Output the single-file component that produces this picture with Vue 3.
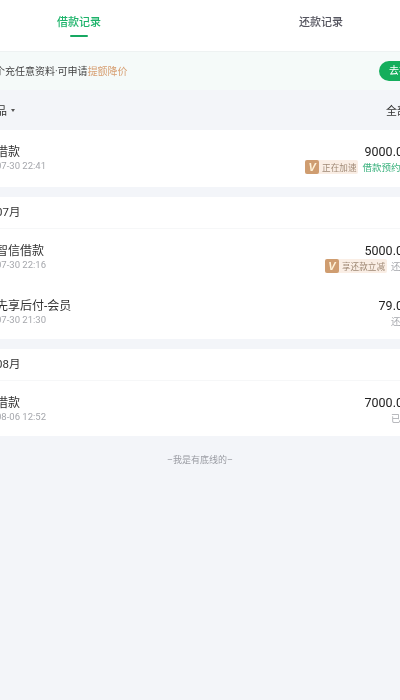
<script setup>
const groups = [
  { month: '', rows: [
    { title: '借款', date: '07-30 22:41', amount: '9000.00', badge: '正在加速', status: '借款预约中', tone: 'green' }
  ]},
  { month: '07月', rows: [
    { title: '智信借款', date: '07-30 22:16', amount: '5000.00', badge: '享还款立减', status: '还款', tone: 'gray' },
    { title: '先享后付-会员', date: '07-30 21:30', amount: '79.00', status: '还款', tone: 'gray' }
  ]},
  { month: '08月', rows: [
    { title: '借款', date: '08-06 12:52', amount: '7000.00', status: '已还', tone: 'gray' }
  ]}
]
</script>

<template>
  <div class="viewport">
    <div class="page">
      <header class="tabs">
        <div class="tab active">借款记录<i class="underline"></i></div>
        <div class="tab">还款记录</div>
      </header>
      <div class="banner">
        <span class="banner-text">个充任意资料·可申请<em>提额降价</em></span>
        <span class="go">去补充</span>
      </div>
      <div class="filter">
        <span class="filter-left">全部产品<i class="caret"></i></span>
        <span class="filter-right">全部</span>
      </div>
      <section v-for="(g, i) in groups" :key="i" class="card" :class="{ solo: !g.month }">
        <div v-if="g.month" class="month">{{ g.month }}</div>
        <div v-for="r in g.rows" :key="r.date" class="row">
          <div class="left">
            <div class="title">{{ r.title }}</div>
            <div class="date">{{ r.date }}</div>
          </div>
          <div class="right">
            <div class="amount">{{ r.amount }}</div>
            <div class="meta">
              <span v-if="r.badge" class="badge"><b class="v">V</b>{{ r.badge }}</span>
              <span class="status" :class="r.tone">{{ r.status }}</span>
            </div>
          </div>
        </div>
      </section>
      <footer class="end">–我是有底线的–</footer>
    </div>
  </div>
</template>

<style scoped>
.viewport { width: 400px; height: 700px; overflow: hidden; background: #f3f5f9; }
.page {
  width: 420px; margin-left: -10px;
  font-family: Roboto, "Noto Sans CJK SC", sans-serif;
  color: #333;
  filter: blur(0.35px);
}
.tabs {
  height: 52px; box-sizing: border-box; display: flex; justify-content: space-between;
  padding: 0 67px; background: #fff; border-bottom: 1px solid #eef2f2;
}
.tab {
  display: flex; flex-direction: column; align-items: center;
  padding-top: 14px; font-size: 11px; line-height: 18px; color: #55555f; font-weight: 500;
}
.active { color: #1cb36a; }
.underline { width: 18px; height: 2px; margin-top: 3px; border-radius: 1px; background: #17a862; }
.banner {
  height: 38px; box-sizing: border-box; padding: 0 0 1px 5px; display: flex; align-items: center; justify-content: space-between;
  background: #f5faf9; font-size: 10px; color: #444;
}
.banner-text { margin-top: -1px; }
.banner em { font-style: normal; color: #d79f72; }
.go {
  flex: none; width: 50px; height: 20px; margin-right: -19px; border-radius: 10px;
  background: #14ae5c; color: #fff; font-size: 10px; line-height: 20px; text-align: center;
}
.filter {
  height: 40px; display: flex; align-items: center; justify-content: space-between;
  padding-right: 2px; font-size: 11px; color: #333;
}
.filter-left { display: flex; align-items: center; margin-left: -27px; }
.caret {
  width: 0; height: 0; margin-left: 4px;
  border-left: 2px solid transparent; border-right: 2px solid transparent; border-top: 3px solid #555;
}
.card { background: #fff; margin-bottom: 10px; }
.card.solo { padding-bottom: 2px; }
.month {
  height: 32px; line-height: 31px; padding-left: 6px; font-size: 11.5px; color: #333;
  border-bottom: 1px solid #f6f7f8; box-sizing: border-box;
}
.row { height: 55px; display: flex; justify-content: space-between; padding-left: 6px; }
.title { margin-top: 14px; font-size: 12px; line-height: 16px; color: #333; white-space: nowrap; }
.date { font-size: 9.5px; line-height: 12px; color: #a5a7ac; white-space: nowrap; }
.right { display: flex; flex-direction: column; align-items: flex-end; }
.amount { margin-top: 13.5px; font-size: 12.5px; line-height: 16px; color: #222; }
.meta { display: flex; align-items: center; height: 15px; font-size: 9.5px; }
.badge {
  display: flex; align-items: center; height: 14px; background: #faeee5; color: #a08a76;
  padding-right: 2px; margin-right: 4px; border-radius: 2px; white-space: nowrap; font-size: 8.6px;
}
.v {
  width: 14px; height: 14px; margin-right: 3px; background: #cf9d70; color: #fff2d8; border-radius: 2px;
  font: italic 700 11px/14px "Liberation Sans", sans-serif; text-align: center;
}
.status { white-space: nowrap; }
.status.green { color: #3cb27f; }
.status.gray { color: #a5a7ac; }
.end { margin-top: 17px; text-align: center; font-size: 9px; color: #9a9ca3; line-height: 14px; }
</style>
